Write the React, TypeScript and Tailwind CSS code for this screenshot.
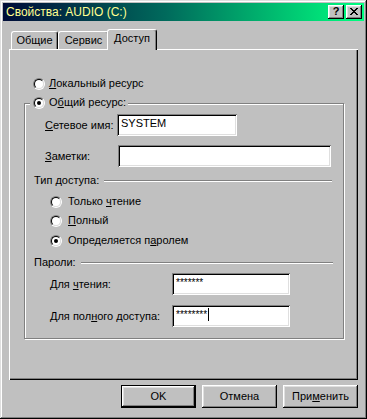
import React from "react";

const raised =
  "shadow-[inset_-1px_-1px_#000,inset_1px_1px_#fff,inset_-2px_-2px_#808080,inset_2px_2px_#dfdfdf]";
const sunken =
  "shadow-[inset_1px_1px_#808080,inset_-1px_-1px_#fff,inset_2px_2px_#000,inset_-2px_-2px_#dfdfdf]";

function Radio({ checked }: { checked?: boolean }) {
  return (
    <span className="flex h-[12px] w-[12px] shrink-0 rounded-full border border-t-[#808080] border-l-[#808080] border-r-white border-b-white">
      <span className="flex flex-1 items-center justify-center rounded-full border border-t-black border-l-black border-r-[#dfdfdf] border-b-[#dfdfdf] bg-white">
        {checked && <span className="h-[4px] w-[4px] rounded-full bg-black" />}
      </span>
    </span>
  );
}

function Field({ w, children }: { w: string; children?: React.ReactNode }) {
  return (
    <div className={`flex h-[22px] items-start bg-white px-[4px] pt-[3px] ${sunken} ${w}`}>
      {children}
    </div>
  );
}

function Header({ text, mt, mr }: { text: string; mt: string; mr: string }) {
  return (
    <div className={`ml-[9px] flex h-[13px] items-center gap-[5px] ${mt} ${mr}`}>
      <span>{text}</span>
      <span className="h-[2px] flex-1 border-t border-b border-t-[#808080] border-b-white" />
    </div>
  );
}

function CloseGlyph() {
  const px = [
    [0, 0], [1, 0], [6, 0], [7, 0],
    [1, 1], [2, 1], [5, 1], [6, 1],
    [2, 2], [3, 2], [4, 2], [5, 2],
    [3, 3], [4, 3],
    [2, 4], [3, 4], [4, 4], [5, 4],
    [1, 5], [2, 5], [5, 5], [6, 5],
    [0, 6], [1, 6], [6, 6], [7, 6],
  ];
  return (
    <svg width="8" height="7" viewBox="0 0 8 7" shapeRendering="crispEdges">
      {px.map(([x, y]) => (
        <rect key={`${x}-${y}`} x={x} y={y} width="1" height="1" fill="#000" />
      ))}
    </svg>
  );
}

export default function App() {
  return (
    <div
      className={`flex h-[419px] w-[367px] flex-col bg-[#c0c0c0] p-[3px] font-['Liberation_Sans',Arial,sans-serif] text-[11px] leading-[13px] text-black shadow-[inset_-1px_-1px_#000,inset_1px_1px_#dfdfdf,inset_-2px_-2px_#808080,inset_2px_2px_#fff]`}
    >
      {/* title bar */}
      <div className="flex h-[18px] items-center bg-linear-to-r/srgb from-[#000c38] via-[#006a5c] via-45% to-[#00ff80] pl-[3px] pr-[2px]">
        <span className="flex-1 text-[12px] text-[#ffff90]">Свойства: AUDIO (C:)</span>
        <div className="flex gap-[1px]">
          <button className={`flex h-[14px] w-[16px] items-center justify-center bg-[#c0c0c0] pb-[1px] text-[11px] font-bold ${raised}`}>?</button>
          <button className={`ml-[1px] flex h-[14px] w-[16px] items-center justify-center bg-[#c0c0c0] pb-[1px] ${raised}`}>
            <CloseGlyph />
          </button>
        </div>
      </div>

      <div className="flex flex-1 flex-col px-[6px] pt-[8px]">
        {/* tabs */}
        <div className="flex h-[21px] items-end pl-[2px]">
          <div className="mb-[1px] flex h-[18px] w-[47px] items-center justify-center rounded-t-[3px] border-t border-l border-r border-t-white border-l-white border-r-black shadow-[inset_-1px_0_#808080]">
            Общие
          </div>
          <div className="mb-[1px] flex h-[18px] w-[51px] items-center justify-center rounded-t-[3px] border-t border-l border-r border-t-white border-l-white border-r-black shadow-[inset_-1px_0_#808080]">
            Сервис
          </div>
          <div className="relative z-10 -ml-[2px] flex h-[21px] w-[50px] items-center justify-center rounded-t-[3px] border-t border-l border-r border-t-white border-l-white border-r-black bg-[#c0c0c0] pb-[3px] shadow-[inset_-1px_0_#808080]">
            Доступ
          </div>
        </div>

        {/* panel */}
        <div className="-mt-px flex h-[331px] flex-col border-t border-l border-white pl-[14px] pt-[27px] shadow-[inset_-1px_-1px_#000,inset_-2px_-2px_#808080]">
          <div className="ml-[9px] flex h-[13px] items-center gap-[4px]">
            <Radio />
            <span>
              <u>Л</u>окальный ресурс
            </span>
          </div>

          <div className="relative mt-[13px] flex h-[236px] w-[320px] flex-col border border-[#808080] shadow-[1px_1px_0_#fff,inset_1px_1px_0_#fff]">
            <div className="absolute -top-[8px] left-[5px] flex h-[13px] items-center gap-[4px] bg-[#c0c0c0] pl-[3px] pr-[2px]">
              <Radio checked />
              <span>
                О<u>б</u>щий ресурс:
              </span>
            </div>

            <div className="mt-[10px] ml-[20px] flex items-center">
              <span className="w-[72px]">
                <u>С</u>етевое имя:
              </span>
              <Field w="w-[120px]">SYSTEM</Field>
            </div>
            <div className="mt-[9px] ml-[20px] flex items-center">
              <span className="w-[73px]">
                <u>З</u>аметки:
              </span>
              <Field w="w-[213px]" />
            </div>

            <Header text="Тип доступа:" mt="mt-[7px]" mr="mr-[11px]" />

            <div className="mt-[8px] ml-[25px] flex h-[13px] items-center gap-[6px]">
              <Radio />
              <span>
                Только <u>ч</u>тение
              </span>
            </div>
            <div className="mt-[6px] ml-[25px] flex h-[13px] items-center gap-[6px]">
              <Radio />
              <span>
                <u>П</u>олный
              </span>
            </div>
            <div className="mt-[7px] ml-[25px] flex h-[13px] items-center gap-[6px]">
              <Radio checked />
              <span>
                Определяется п<u>а</u>ролем
              </span>
            </div>

            <Header text="Пароли:" mt="mt-[9px]" mr="mr-[10px]" />

            <div className="mt-[4px] ml-[25px] flex items-center">
              <span className="w-[122px]">
                Для <u>ч</u>тения:
              </span>
              <Field w="w-[118px]">
                <span className="text-[10px]">*******</span>
              </Field>
            </div>
            <div className="mt-[10px] ml-[25px] flex items-center">
              <span className="w-[122px]">
                Для пол<u>н</u>ого доступа:
              </span>
              <Field w="w-[118px]">
                <span className="text-[10px]">********</span>
                <span className="ml-[1px] h-[13px] w-[1px] bg-black" />
              </Field>
            </div>
          </div>
        </div>

        {/* buttons */}
        <div className="mt-[5px] flex justify-end gap-[6px]">
          <button className={`flex h-[23px] w-[75px] items-center justify-center border border-black ${raised}`}>OK</button>
          <button className={`flex h-[23px] w-[75px] items-center justify-center ${raised}`}>Отмена</button>
          <button className={`flex h-[23px] w-[75px] items-center justify-center ${raised}`}>
            При<u>м</u>енить
          </button>
        </div>
      </div>
    </div>
  );
}
